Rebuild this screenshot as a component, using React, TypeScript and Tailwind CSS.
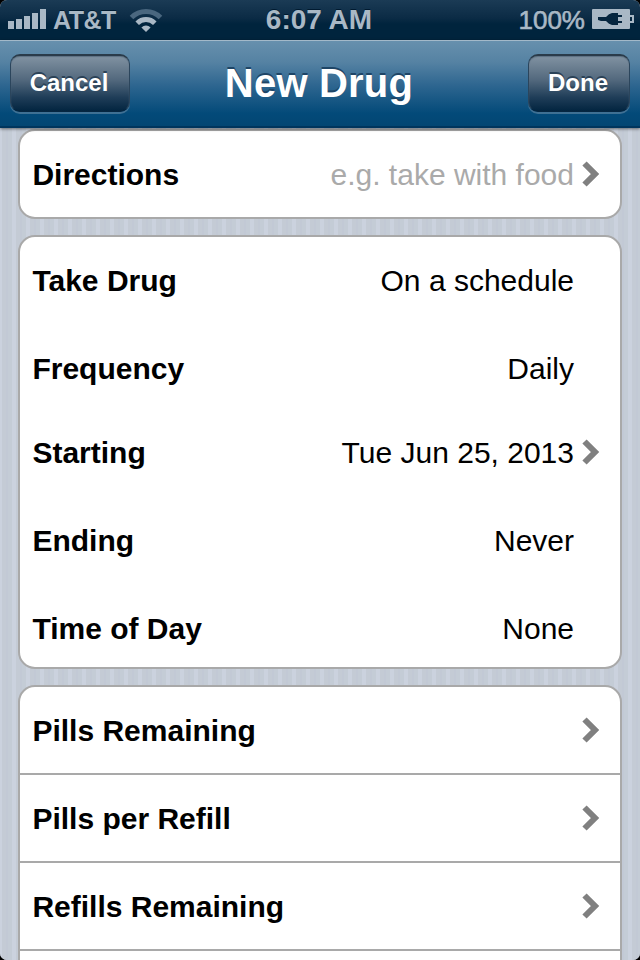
import type { ReactNode } from "react";

const SignalBars = () => (
  <svg width="38" height="20" viewBox="0 0 38 20" fill="#a9b8c5">
    <path d="M0 12h6v8H0zM8 10h6v10H8zM16 7h6v13h-6zM24 4h6v16h-6zM32 0h6v20h-6z" />
  </svg>
);

const Wifi = () => (
  <svg width="34" height="26" viewBox="0 0 34 26" fill="none" strokeWidth="5">
    <path d="M2.5 10.5a20.5 20.5 0 0 1 29 0" stroke="#4a677f" />
    <path d="M8.2 16.2a12.5 12.5 0 0 1 17.6 0" stroke="#a9b8c5" />
    <path d="M17 25l-4.6-4.6a6.5 6.5 0 0 1 9.2 0z" fill="#a9b8c5" />
  </svg>
);

const Battery = () => (
  <svg width="42" height="20" viewBox="0 0 42 20">
    <rect width="38" height="20" rx="1" fill="#a9b8c5" />
    <path d="M38 7h3v6h-3" fill="none" stroke="#a9b8c5" strokeWidth="2" />
    <path
      d="M6 8h8l3-2.7 3-1.3h6v2h4v2h-4v4h4v2h-4v2h-6l-3-1.3-3-2.7H9L6 11z"
      fill="#06263f"
    />
  </svg>
);

const Chevron = () => (
  <svg width="18" height="26" viewBox="0 0 18 26" fill="none" stroke="#808080" strokeWidth="6">
    <path d="M2.5 2.5L13 13 2.5 23.5" />
  </svg>
);

function NavButton({ children, width }: { children: ReactNode; width: string }) {
  return (
    <button
      className={`${width} h-[58px] rounded-[10px] border border-t-2 border-[#2b455c] border-t-[#2a3b4a] border-b-[#062641] bg-[linear-gradient(#8596a5_0%,#52687d_45%,#1f3d58_75%,#00233e_100%)] bg-origin-border pb-px pr-0.5 text-2xl font-bold leading-none text-white shadow-[0_2px_0_#3f7093,inset_0_1px_1px_#5d7183] [text-shadow:0_-2px_0_#2b4257]`}
    >
      {children}
    </button>
  );
}

function Row({
  label,
  value,
  hint = false,
  arrow = false,
  className = "h-[88px]",
}: {
  label: string;
  value?: string;
  hint?: boolean;
  arrow?: boolean;
  className?: string;
}) {
  return (
    <div className={`flex shrink-0 items-center pl-[12.4px] pr-5 ${className}`}>
      <span className="grow font-bold">{label}</span>
      <span className={hint ? "text-[#aaaaaa]" : "text-black"}>{value}</span>
      <span className="-mt-0.5 ml-2 flex w-[18px]">{arrow && <Chevron />}</span>
    </div>
  );
}

const card = "shrink-0 overflow-hidden rounded-[17px] border-2 border-[#a9a9a9] bg-white";

export default function App() {
  return (
    <div className="h-[960px] w-[640px] overflow-hidden bg-black font-['Liberation_Sans',Arial,sans-serif]">
      <div className="flex h-full flex-col overflow-hidden rounded-[7px] bg-[#c4cbd6]">
        <div className="grid h-10 shrink-0 grid-cols-3 bg-[linear-gradient(#1b3b55_0%,#0b2b45_45%,#00243d_60%,#00243d_100%)] font-bold text-[#a9b8c5] [text-shadow:0_-1px_0_#001a30]">
          <div className="flex h-[38px] items-center pl-2">
            <SignalBars />
            <span className="ml-[7px] mt-0.5 w-[63px] text-[25px] leading-none tracking-[-0.5px]">AT&amp;T</span>
            <span className="ml-[13px] mt-0.5"><Wifi /></span>
          </div>
          <div className="flex h-10 items-center justify-center pr-[2px] text-[28px] leading-none">6:07 AM</div>
          <div className="flex h-[38px] items-center justify-end pr-1.5">
            <span className="mr-[7px] mt-0.5 text-[26px] font-normal leading-none [-webkit-text-stroke:0.6px_#a9b8c5]">100%</span>
            <Battery />
          </div>
        </div>

        <header className="z-10 flex h-[88px] shrink-0 items-start justify-between border-b-2 border-t border-b-[#00355d] border-t-[#a3b9c9] bg-[linear-gradient(#6790ad_0%,#5582a3_25%,#2e6690_52%,#034a79_85%,#034673_100%)] px-2.5 pt-[13px] shadow-[0_1px_3px_rgba(0,0,0,0.5)]">
          <NavButton width="w-[120px]">Cancel</NavButton>
          <h1 className="mr-5 pt-[9px] text-[40px] font-bold leading-none tracking-[0.2px] text-white [text-shadow:0_-2px_0_#1e4566]">
            New Drug
          </h1>
          <NavButton width="w-[102px]">Done</NavButton>
        </header>

        <main className="flex min-h-0 grow flex-col gap-4 overflow-hidden bg-[repeating-linear-gradient(90deg,#cbd2de_0px,#cbd2de_2px,#c4cbd5_2px,#c4cbd5_6px,#c2c9d5_6px,#c2c9d5_8px,#c4ccd6_8px,#c4ccd6_12px,#cbd2de_12px,#cbd2de_14px)] px-[18px] pt-px text-[30px] leading-none">
          <section className={card}>
            <Row label="Directions" value="e.g. take with food" hint arrow className="h-[86px] pt-px" />
          </section>

          <section className={card}>
            <Row label="Take Drug" value="On a schedule" />
            <Row label="Frequency" value="Daily" />
            <Row label="Starting" value="Tue Jun 25, 2013" arrow className="h-[84px] pb-1" />
            <Row label="Ending" value="Never" />
            <Row label="Time of Day" value="None" className="h-[82px] pt-1.5" />
          </section>

          <section className={card}>
            <Row label="Pills Remaining" arrow className="h-[88px] border-b-2 border-[#a9a9a9] pt-0.5" />
            <Row label="Pills per Refill" arrow className="h-[88px] border-b-2 border-[#a9a9a9] pt-0.5" />
            <Row label="Refills Remaining" arrow className="h-[88px] border-b-2 border-[#a9a9a9] pt-0.5" />
            <Row label="" />
          </section>
        </main>
      </div>
    </div>
  );
}
